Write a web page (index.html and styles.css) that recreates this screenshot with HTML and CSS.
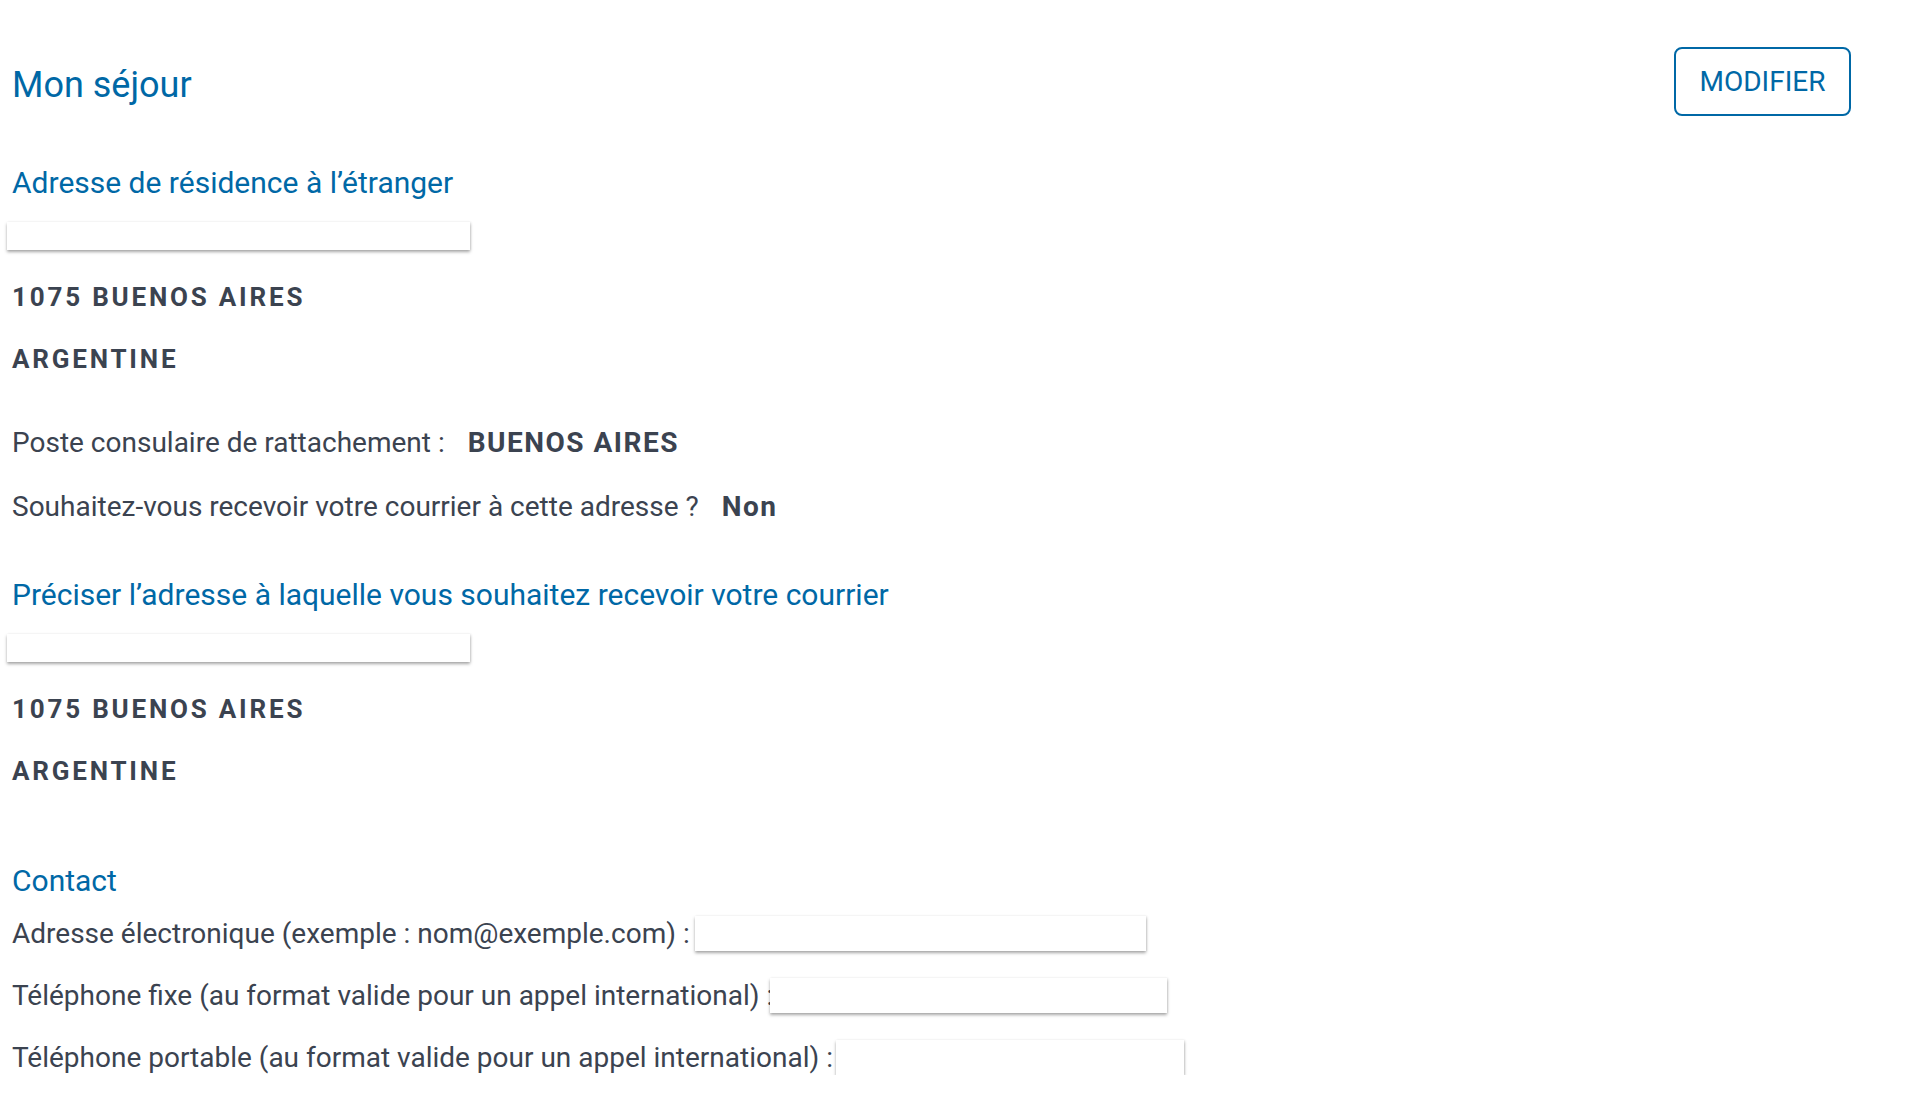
FILE: index.html
```html
<!DOCTYPE html>
<html>
	<head>
		<link rel="stylesheet" href="styles.css">
	</head>
	<body>
		<section class="page">
			<header class="page-head">
				<h1 class="title">Mon séjour</h1>
				<button class="outline-button">MODIFIER</button>
			</header>

			<h2 class="subtitle">Adresse de résidence à l’étranger</h2>
			<div class="field-box"></div>
			<p class="address first">1075 BUENOS AIRES</p>
			<p class="address">ARGENTINE</p>

			<p class="info first">Poste consulaire de rattachement : <span class="value">BUENOS AIRES</span></p>
			<p class="info">Souhaitez-vous recevoir votre courrier à cette adresse ? <span class="value">Non</span></p>

			<h2 class="subtitle">Préciser l’adresse à laquelle vous souhaitez recevoir votre courrier</h2>
			<div class="field-box"></div>
			<p class="address first">1075 BUENOS AIRES</p>
			<p class="address">ARGENTINE</p>

			<h2 class="subtitle contact">Contact</h2>
			<div class="contact-row first">
				<span>Adresse électronique (exemple : nom@exemple.com) :</span>
				<div class="field-box inline email"></div>
			</div>
			<div class="contact-row">
				<span>Téléphone fixe (au format valide pour un appel international) :</span>
				<div class="field-box inline fixe"></div>
			</div>
			<div class="contact-row">
				<span>Téléphone portable (au format valide pour un appel international) :</span>
				<div class="field-box inline mobile"></div>
			</div>
		</section>
	</body>
</html>
```

FILE: styles.css
```css
body {
	margin: 0;
	padding: 0;
	background-color: #fff;
	font-family: Roboto, "Liberation Sans", sans-serif;
	color: #3b4350;
}
.page {
	padding: 47px 59px 0 12px;
}

.page-head {
	display: flex;
	justify-content: space-between;
	align-items: flex-start;
}
.title {
	margin: 17px 0 0 0;
	font-size: 36px;
	line-height: 43px;
	font-weight: 400;
	color: #0068a6;
}
.outline-button {
	width: 177px;
	height: 69px;
	padding: 0;
	font-family: Roboto, "Liberation Sans", sans-serif;
	font-size: 28px;
	color: #0068a6;
	background-color: #fff;
	border: 2px solid #0068a6;
	border-radius: 8px;
	cursor: pointer;
}

.subtitle {
	margin: 49px 0 0 0;
	font-size: 30px;
	line-height: 36px;
	font-weight: 400;
	color: #0068a6;
}
.subtitle.contact {
	margin-top: 77px;
}

.field-box {
	width: 463px;
	height: 28px;
	margin: 21px 0 0 -5px;
	background-color: #fff;
	box-shadow: 0 2px 3px rgba(0, 0, 0, 0.34), 1px 0 2px rgba(0, 0, 0, 0.08);
}

.address {
	margin: 32px 0 0 0;
	font-size: 26px;
	line-height: 30px;
	font-weight: 700;
	letter-spacing: 2.8px;
}
.address.first {
	margin-top: 32px;
}

.info {
	margin: 30px 0 0 0;
	font-size: 28px;
	line-height: 34px;
}
.info.first {
	margin-top: 52px;
}
.info + .subtitle {
	margin-top: 53px;
}
.info .value {
	margin-left: 16px;
	font-weight: 700;
	letter-spacing: 1.5px;
}

.contact-row {
	display: flex;
	align-items: center;
	margin-top: 27px;
	font-size: 28px;
	line-height: 34px;
}
.contact-row.first {
	margin-top: 17px;
}
.contact-row .field-box.inline {
	height: 35px;
	margin: 0 0 0 5px;
}
.field-box.email {
	width: 451px;
}
.contact-row .field-box.fixe {
	width: 397px;
	margin-left: -3px;
}
.contact-row .field-box.mobile {
	width: 348px;
	margin-left: 3px;
}
```
